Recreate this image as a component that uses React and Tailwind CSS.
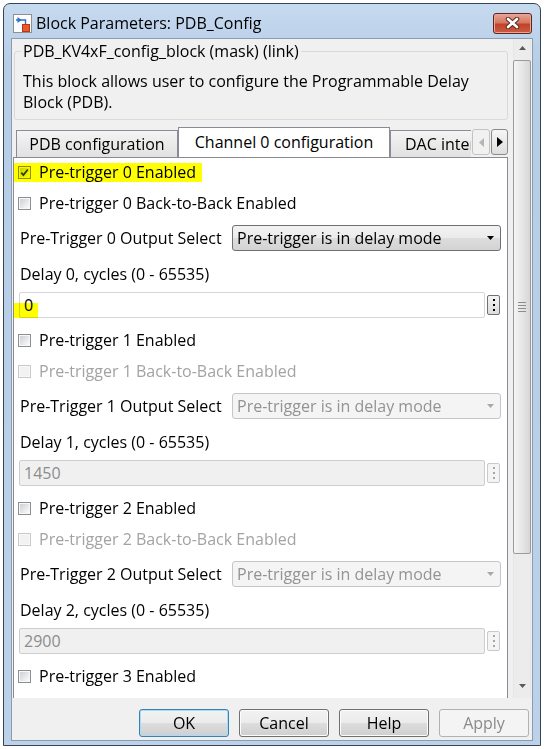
import React from 'react'

function Check({ checked, disabled }) {
  return (
    <span
      className={`flex h-[13px] w-[13px] shrink-0 items-center justify-center border p-[1px] ${
        disabled ? 'border-[#cacaca] bg-[#f7f7f7]' : 'border-[#8e8f8f] bg-[#f7f7f7] mix-blend-multiply'
      }`}
    >
      <span
        className={`flex h-full w-full items-center justify-center ${
          disabled ? 'bg-[#f2f2f2]' : 'bg-linear-to-br from-[#cdd1d6] to-[#fbfbfb]'
        }`}
      >
        {checked && (
          <svg width="9" height="9" viewBox="0 0 9 9">
            <path d="M1.3 4.6L3.4 7.1L7.8 1.4" fill="none" stroke="#2f3d5c" strokeWidth="1.7" />
          </svg>
        )}
      </span>
    </span>
  )
}

function CheckRow({ label, checked, disabled, mark }) {
  return (
    <div className="flex h-[24px] items-center">
      <div className={`flex h-[19px] items-center gap-[8px] pl-[4px] pr-[6px] ${mark ? 'bg-[#ffff00]' : ''}`}>
        <Check checked={checked} disabled={disabled} />
        <span className={`whitespace-nowrap leading-[19px] ${disabled ? 'text-[#a3a3a3]' : ''}`}>{label}</span>
      </div>
    </div>
  )
}

function SelectRow({ n, disabled }) {
  return (
    <div className="flex h-[26px] items-center justify-between pl-[6px] pr-[6px]">
      <span className="whitespace-nowrap">Pre-Trigger {n} Output Select</span>
      <div
        className={`flex h-full w-[269px] items-center justify-between rounded-[3px] border pl-[4px] pr-[6px] ${
          disabled
            ? 'border-[#c6c6c6] bg-[#f4f4f4] text-[#939393]'
            : 'border-[#707070] bg-[linear-gradient(#f2f2f2,#ebebeb_50%,#dddddd_50%,#d3d3d3)]'
        }`}
      >
        <span className="whitespace-nowrap">Pre-trigger is in delay mode</span>
        <svg width="7" height="4" viewBox="0 0 7 4">
          <path d="M0 0H7L3.5 4Z" fill={disabled ? '#a8a8a8' : '#000'} />
        </svg>
      </div>
    </div>
  )
}

function Dots({ disabled }) {
  return (
    <div
      className={`flex h-[20px] w-[13px] flex-col items-center justify-center gap-[3px] rounded-[2px] border ${
        disabled ? 'border-[#c9c9c9] bg-[#f4f4f4]' : 'border-[#707070] bg-linear-to-b from-[#f4f4f4] to-[#dcdcdc]'
      }`}
    >
      <span className={`h-[2px] w-[2px] ${disabled ? 'bg-[#a8a8a8]' : 'bg-black'}`} />
      <span className={`h-[2px] w-[2px] ${disabled ? 'bg-[#a8a8a8]' : 'bg-black'}`} />
      <span className={`h-[2px] w-[2px] ${disabled ? 'bg-[#a8a8a8]' : 'bg-black'}`} />
    </div>
  )
}

function FieldRow({ value, disabled, mark }) {
  return (
    <div className="flex h-[26px] items-center gap-[2px] pl-[5px] pr-[7px]">
      <div
        className={`relative flex h-full flex-1 items-center rounded-[2px] border pl-[4px] ${
          disabled ? 'border-[#cdcdcd] bg-[#f0f0f0] text-[#8c8c8c]' : 'border-[#d3d6db] bg-white'
        }`}
      >
        {value}
        {mark && <span className="absolute left-[-6px] top-[10px] h-[15px] w-[24px] bg-[#ffff00] mix-blend-multiply" />}
      </div>
      <Dots disabled={disabled} />
    </div>
  )
}

function Block({ n, enabled, mark, value }) {
  const off = !enabled
  return (
    <div className="flex flex-col">
      <CheckRow label={`Pre-trigger ${n} Enabled`} checked={enabled} mark={mark} />
      <div className="mt-[7px]">
        <CheckRow label={`Pre-trigger ${n} Back-to-Back Enabled`} disabled={off} />
      </div>
      <div className="mt-[10px]">
        <SelectRow n={n} disabled={off} />
      </div>
      <div className="mt-[11px] flex h-[24px] items-center pl-[6px]">Delay {n}, cycles (0 - 65535)</div>
      <div className="mt-[6px]">
        <FieldRow value={value} disabled={off} mark={mark} />
      </div>
    </div>
  )
}

function Button({ children, primary, disabled }) {
  let look = 'border-[#707070] bg-[linear-gradient(#f2f2f2,#ebebeb_50%,#dddddd_50%,#cfcfcf)] shadow-[inset_0_0_0_1px_#fcfcfc]'
  if (primary) look = 'border-[#3c7fb1] bg-[linear-gradient(#f2f2f2,#ebebeb_50%,#dddddd_50%,#cfcfcf)] shadow-[inset_0_0_0_1px_#a9dcf6]'
  if (disabled) look = 'border-[#adb2b5] bg-[#f4f4f4] text-[#8a8a8a]'
  return (
    <div className={`flex h-[28px] w-[90px] items-center justify-center rounded-[3px] border ${look}`}>{children}</div>
  )
}

function ScrollBar() {
  return (
    <div className="flex w-[18px] flex-col border-x border-[#e6e6e6] bg-[#ececec]">
      <div className="flex h-[18px] items-center justify-center">
        <svg width="7" height="4" viewBox="0 0 7 4">
          <path d="M0 4H7L3.5 0Z" fill="#5a5a5a" />
        </svg>
      </div>
      <div className="mx-[-1px] mt-[3px] flex h-[494px] items-center justify-center rounded-[2px] border border-[#9b9b9b] bg-linear-to-r from-[#f4f4f4] via-[#e7e7e7] to-[#d6d6d6]">
        <div className="flex flex-col gap-[2px]">
          <span className="h-[1px] w-[8px] bg-[#8c8c8c]" />
          <span className="h-[1px] w-[8px] bg-[#8c8c8c]" />
          <span className="h-[1px] w-[8px] bg-[#8c8c8c]" />
          <span className="h-[1px] w-[8px] bg-[#8c8c8c]" />
        </div>
      </div>
      <div className="flex-1" />
      <div className="mb-[3px] flex h-[18px] items-center justify-center">
        <svg width="7" height="4" viewBox="0 0 7 4">
          <path d="M0 0H7L3.5 4Z" fill="#5a5a5a" />
        </svg>
      </div>
    </div>
  )
}

export default function App() {
  return (
    <div className="h-[749px] w-[545px] overflow-hidden bg-white pl-[3px] pt-[3px] font-['Open_Sans',sans-serif] text-[16px] text-black">
      <div className="flex h-[743px] w-[538px] flex-col rounded-t-[7px] border border-[#3a4554] bg-[linear-gradient(#c6daef,#b6cde8_60px,#bcd2ea)]">
        {/* title bar */}
        <div className="flex h-[34px] items-center pl-[9px] pr-[8px] pt-[4px]">
          <svg width="19" height="19" viewBox="0 0 19 19">
            <rect x="0.5" y="0.5" width="18" height="18" fill="#fdfdfd" stroke="#8f8f8f" />
            <path d="M3 6H12.5V10" fill="none" stroke="#2f6fc4" strokeWidth="1.4" />
            <path d="M4.5 3L8.5 6L4.5 9Z" fill="#2f6fc4" />
            <rect x="9.5" y="10.5" width="7" height="7" fill="#ea5a2a" stroke="#b23a14" />
          </svg>
          <span className="ml-[4px] flex-1 leading-[20px]">Block Parameters: PDB_Config</span>
          <div className="flex h-[21px] w-[39px] items-center justify-center rounded-[3px] border border-[#5e251b] bg-[linear-gradient(#e6a595,#d47863_45%,#c2422a_55%,#cc5d42)] shadow-[inset_0_0_0_1px_#eaa797]">
            <svg width="15" height="12" viewBox="0 0 15 12">
              <path d="M3 2L12 10M12 2L3 10" stroke="#5b2a22" strokeWidth="4.6" strokeLinecap="round" />
              <path d="M3 2L12 10M12 2L3 10" stroke="#ffffff" strokeWidth="2.6" strokeLinecap="round" />
            </svg>
          </div>
        </div>

        {/* client */}
        <div className="mx-[7px] mb-[4px] flex flex-1 flex-col border border-[#8e9bab] bg-[#f0f0f0]">
          <div className="flex h-[659px] pr-[1px]">
            <div className="flex flex-1 flex-col overflow-hidden">
              <fieldset className="ml-[2px] mr-[5px] mt-[2px] rounded-[3px] border border-[#d9d9d9] pb-[6px] pl-[8px]">
                <legend className="ml-[-2px] px-[2px] leading-[20px]">PDB_KV4xF_config_block (mask) (link)</legend>
                <p className="mt-[10px] leading-[21px]">
                  This block allows user to configure the Programmable Delay
                  <br />
                  Block (PDB).
                </p>
              </fieldset>

              {/* tabs */}
              <div className="ml-[1px] mr-[5px] mt-[7px] flex h-[30px] items-end">
                <div className="flex flex-1 items-end overflow-hidden pl-[3px]">
                  <div className="flex h-[27px] w-[162px] shrink-0 items-center justify-center border border-b-0 border-[#898c95] bg-linear-to-b from-[#f4f4f4] to-[#e1e1e1]">
                    PDB configuration
                  </div>
                  <div className="relative z-10 mb-[-1px] flex h-[31px] w-[212px] shrink-0 items-center justify-center border border-b-0 border-[#898c95] bg-white pb-[2px]">
                    Channel 0 configuration
                  </div>
                  <div className="flex h-[27px] w-[86px] shrink-0 items-center overflow-hidden whitespace-nowrap border-l border-t border-[#898c95] bg-linear-to-b from-[#f4f4f4] to-[#e1e1e1] pl-[14px]">
                    DAC inter
                  </div>
                </div>
                <div className="mb-[2px] ml-[1px] flex h-[26px] w-[18px] items-center justify-center rounded-[3px] border border-[#c3c3c3] bg-[#f1f1f1]">
                  <svg width="5" height="9" viewBox="0 0 5 9">
                    <path d="M5 0V9L0 4.5Z" fill="#b5b5b5" />
                  </svg>
                </div>
                <div className="mb-[2px] ml-[1px] flex h-[26px] w-[17px] items-center justify-center rounded-[3px] border border-[#8a8a8a] bg-linear-to-b from-[#f6f6f6] to-[#dedede]">
                  <svg width="6" height="10" viewBox="0 0 6 10">
                    <path d="M0 0V10L6 5Z" fill="#000" />
                  </svg>
                </div>
              </div>

              <div className="ml-[1px] mr-[5px] flex flex-col gap-[10px] border border-[#898c95] bg-white pb-[40px] pt-[2px]">
                <Block n={0} enabled mark value="0" />
                <Block n={1} value="1450" />
                <Block n={2} value="2900" />
                <CheckRow label="Pre-trigger 3 Enabled" />
              </div>
            </div>
            <ScrollBar />
          </div>

          {/* buttons */}
          <div className="flex justify-end gap-[10px] pr-[3px] pt-[11px]">
            <Button primary>OK</Button>
            <Button>Cancel</Button>
            <Button>Help</Button>
            <Button disabled>Apply</Button>
          </div>
        </div>
      </div>
    </div>
  )
}
